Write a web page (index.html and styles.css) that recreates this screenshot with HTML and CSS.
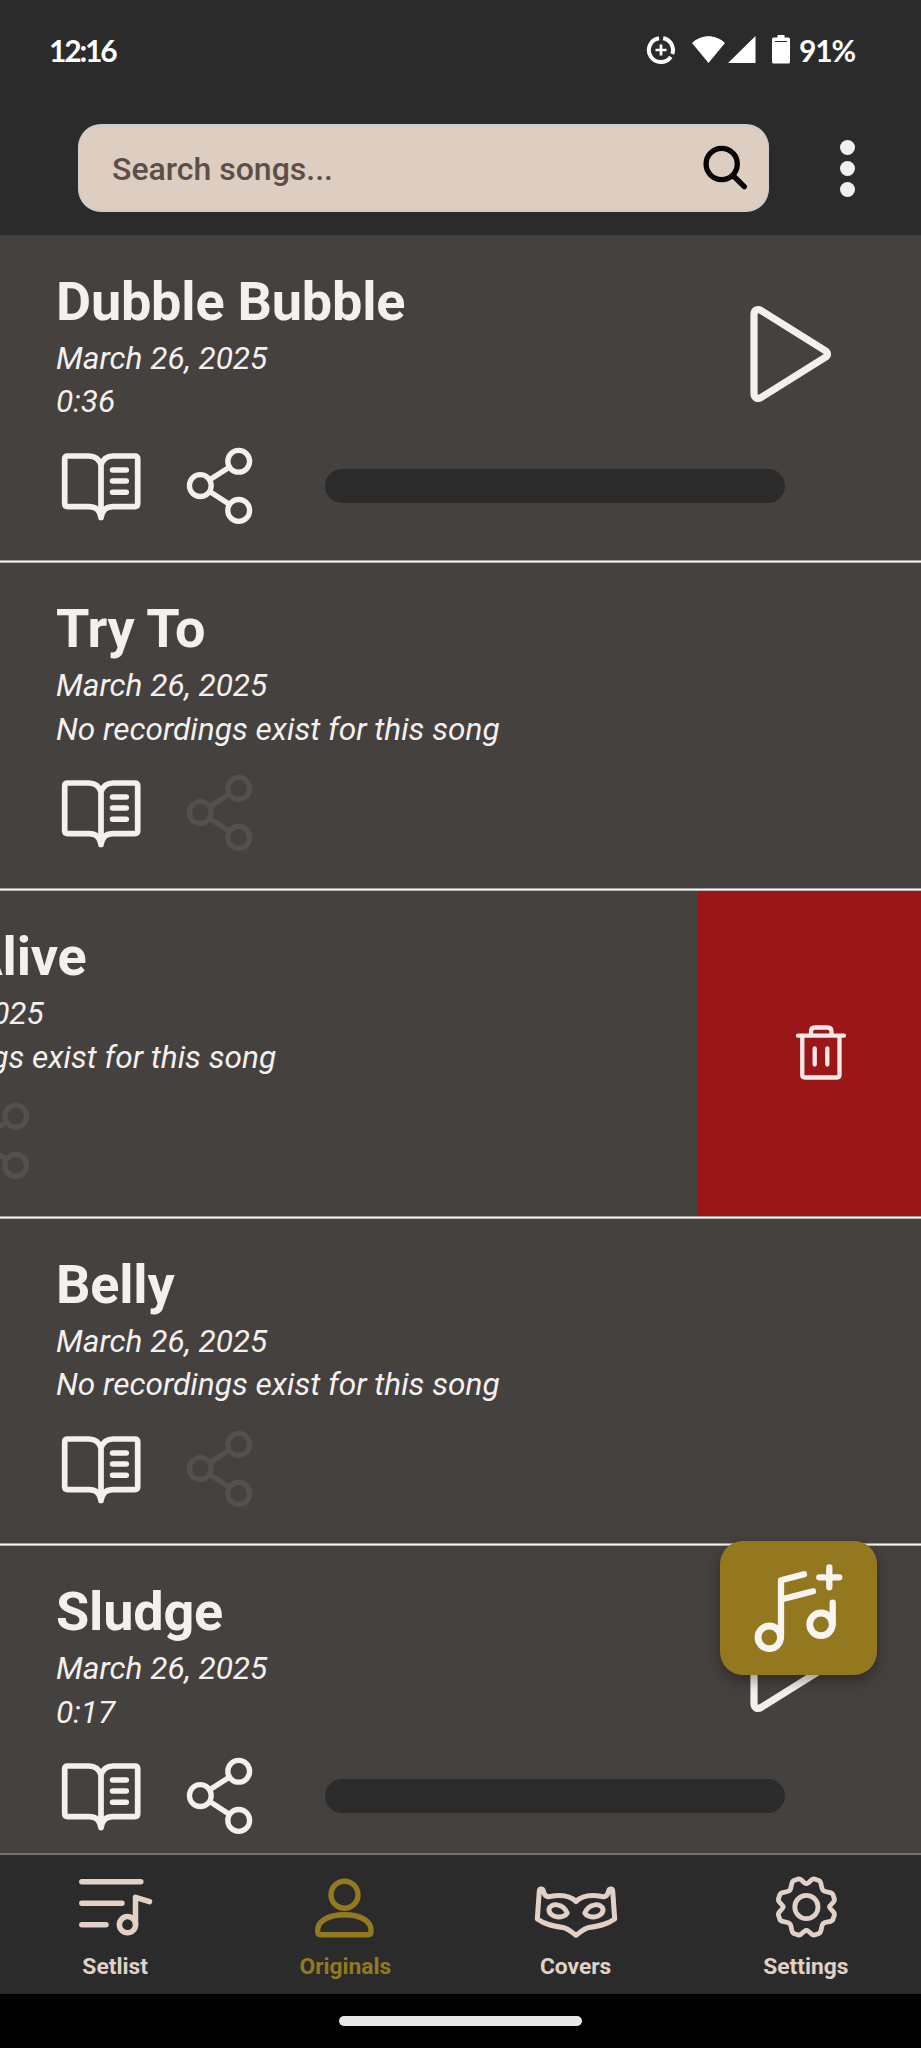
FILE: index.html
```html
<!DOCTYPE html>
<html lang="en">
<head>
<meta charset="utf-8">
<title>Originals</title>
<link rel="stylesheet" href="styles.css">
</head>
<body>
<svg class="defs" aria-hidden="true">
  <symbol id="book" viewBox="0 0 124 80">
    <path d="M45 19C43 13 39 10 33 10H11.7q-3 0-3 3V57.6q0 3 3 3H33C40 60.6 43.5 63.5 45 71.5C46.500 63.500 50 60.600 57 60.600H78.700q3 0 3-3V13q0-3-3-3H57C51 10 47 13 45 19V71.500" stroke-width="5.700"/>
    <path d="M56.500 24H70.300M56.500 35H70.300M56.500 46.200H70.300" stroke-width="5.500"/>
  </symbol>
  <symbol id="share" viewBox="0 0 80 80">
    <g stroke-width="5.300"><circle cx="20.300" cy="39.600" r="10.900"/><circle cx="58.700" cy="15.300" r="10.900"/><circle cx="58.700" cy="64.400" r="10.900"/><path d="M30.500 33.200 48.500 21.700M30.500 46 48.500 57.700"/></g>
  </symbol>
  <symbol id="play" viewBox="0 0 90 104">
    <path stroke-width="7.200" d="M8 12.500C8 8 11.500 6.500 15 8.500L79 48.500C82.300 50.500 82.300 53.500 79 55.500L15 95.500C11.500 97.500 8 96 8 91.500Z"/>
  </symbol>
</svg>
<div class="screen">
  <header class="top">
    <div class="status">
      <span class="clock">12:16</span>
      <div class="status-right">
        <svg class="saver" width="30" height="30" viewBox="0 0 30 30"><path d="M13 3.200A12 12 0 1 0 24.800 21.800M17.200 3.200A12 12 0 0 1 26.300 19" fill="none" stroke="#fff" stroke-width="4"/><path d="M15 9.500v11M9.500 15h11" stroke="#fff" stroke-width="2.700"/></svg>
        <svg class="wifi" width="64" height="30" viewBox="0 0 64 30"><path d="M0 8C9-1 24-1 33 8L16.500 28ZM36 28 63.500 28V1Z" fill="#fff"/></svg>
        <svg class="battery" width="18" height="30" viewBox="0 0 18 30"><path d="M5.500 0h7v2.500h4q1.500 0 1.500 1.500V27q0 1.500-1.500 1.500H1.500Q0 28.500 0 27V4Q0 2.500 1.500 2.500h4Z" fill="#fff"/><path d="M3 6.500h12" stroke="#2b2b2b" stroke-width="1"/></svg>
        <span class="percent">91%</span>
      </div>
    </div>
    <div class="tools">
      <div class="search"><span>Search songs...</span>
        <svg width="50" height="50" viewBox="0 0 50 50" fill="none" stroke="#050303" stroke-width="5.300" stroke-linecap="round"><circle cx="21.700" cy="21" r="15.600"/><path d="M33 32.500 44.300 43.700"/></svg>
      </div>
      <div class="menu"><i></i><i></i><i></i></div>
    </div>
  </header>

  <main class="songs">
    <article class="song"><div class="body">
      <div class="summary"><div><h2>Dubble Bubble</h2><p>March 26, 2025</p><p>0:36</p></div><svg class="ico play"><use href="#play"/></svg></div>
      <div class="actions"><svg class="ico book"><use href="#book"/></svg><svg class="ico share"><use href="#share"/></svg><div class="progress"></div></div>
    </div></article>
    <article class="song"><div class="body">
      <div class="summary"><div><h2>Try To</h2><p>March 26, 2025</p><p>No recordings exist for this song</p></div></div>
      <div class="actions"><svg class="ico book"><use href="#book"/></svg><svg class="ico share off"><use href="#share"/></svg></div>
    </div></article>
    <article class="song swiped"><div class="body">
      <div class="summary"><div><h2>Alive</h2><p>March 26, 2025</p><p>No recordings exist for this song</p></div></div>
      <div class="actions"><svg class="ico book"><use href="#book"/></svg><svg class="ico share off"><use href="#share"/></svg></div>
    </div>
      <div class="delete"><svg width="54" height="58" viewBox="0 0 54 58" fill="none" stroke="#fbe9e6" stroke-width="4.300" stroke-linecap="round" stroke-linejoin="round"><path d="M4 12.700H50M8.300 13V52q0 2.500 2.500 2.500H43q2.500 0 2.500-2.500V13M17 12V8.500q0-4 4-4H33.500q4 0 4 4V12M20.700 25.500V41.500M33.300 25.500V41.500"/></svg></div>
    </article>
    <article class="song"><div class="body">
      <div class="summary"><div><h2>Belly</h2><p>March 26, 2025</p><p>No recordings exist for this song</p></div></div>
      <div class="actions"><svg class="ico book"><use href="#book"/></svg><svg class="ico share off"><use href="#share"/></svg></div>
    </div></article>
    <article class="song"><div class="body">
      <div class="summary"><div><h2>Sludge</h2><p>March 26, 2025</p><p>0:17</p></div><svg class="ico play"><use href="#play"/></svg></div>
      <div class="actions"><svg class="ico book"><use href="#book"/></svg><svg class="ico share"><use href="#share"/></svg><div class="progress"></div></div>
    </div></article>
  </main>

  <nav class="tabs">
    <a class="tab"><svg class="ico" viewBox="0 0 90 80" stroke-width="5.500"><path d="M11.800 11.700H70.800M11.800 33.300H52M11.800 54.700H36M65.500 54.700V27.300L79.500 31.700"/><circle cx="57.500" cy="54.700" r="8.100"/></svg><span>Setlist</span></a>
    <a class="tab active"><svg class="ico" viewBox="0 0 90 80" stroke-width="5.400"><circle cx="44.500" cy="24.700" r="13.500"/><path d="M17.700 60C17.700 52 27 44.700 44.500 44.700S71 52 71 60v1.700q0 3-3 3H20.700q-3 0-3-3Z"/></svg><span>Originals</span></a>
    <a class="tab"><svg class="ico" viewBox="0 0 90 80" stroke-width="5"><path d="M45 31.500C39 25.500 30 24.500 19 26.500C15.500 27.200 14 26 13 23L12.200 20.500C11.500 18.500 8.600 18.500 8.300 20.800L6.300 49C14 54.500 22 56 32 57.500C37 58.500 40 61.500 45 65.300C50 61.500 53 58.500 58 57.500C68 56 76 54.500 83.700 49L81.700 20.800C81.400 18.500 78.500 18.500 77.800 20.500L77 23C76 26 74.500 27.200 71 26.500C60 24.500 51 25.500 45 31.500Z"/><path d="M17.900 39.500C19.500 32.500 32 33 36.200 43C33 49 18.500 48.500 17.900 39.500ZM72.100 39.500C70.500 32.500 58 33 53.800 43C57 49 71.500 48.500 72.100 39.500Z"/></svg><span>Covers</span></a>
    <a class="tab"><svg class="ico" viewBox="0 0 90 80" stroke-width="4.800"><g transform="translate(45.400 37)"><circle r="11.600"/>
      <path id="cog" d="M0-23.300C3-23.300 4-28.500 8-28L12.500-26.500C16-25 14-19.500 16.500-16.800C19.500-14 25-16 26.500-12.500L28-8C28.500-4 23.300-3 23.300 0"/><use href="#cog" transform="rotate(90)"/><use href="#cog" transform="rotate(180)"/><use href="#cog" transform="rotate(270)"/></g></svg><span>Settings</span></a>
  </nav>
  <footer class="home"><div></div></footer>

  <button class="fab" aria-label="Add song"><svg class="ico" width="157" height="134" viewBox="0 0 157 134" stroke-width="6.300"><circle cx="49.300" cy="96.300" r="11.300" stroke-width="6.800"/><path d="M61 96.300V39.300L84 33.200M61 58.500 93 50.300M112.700 83.300V61.700M109.300 26.300V46.300M99.300 36.300H119.300"/><circle cx="101" cy="83.300" r="11.300" stroke-width="6.800"/></svg></button>
</div>
</body>
</html>
```
FILE: styles.css
```css
* { box-sizing: border-box; }
body { margin: 0; background: #000; font-family: Roboto, "Liberation Sans", sans-serif; }
h2, p { margin: 0; }
svg { display: block; flex: none; }
.defs { position: absolute; width: 0; height: 0; }
.screen { position: relative; width: 921px; height: 2048px; overflow: hidden; display: flex; flex-direction: column; }
.ico { fill: none; stroke: currentColor; stroke-linecap: round; stroke-linejoin: round; }

.top { height: 235px; flex: none; background: #2b2b2b; }
.status { height: 100px; padding: 0 65px 0 49px; display: flex; align-items: center; justify-content: space-between; color: #fff; font: 700 30px/36px Lato, sans-serif; }
.clock { font-size: 30px; letter-spacing: -2.2px; }
.status-right { display: flex; align-items: center; }
.wifi { margin-left: 16px; }
.battery { margin-left: 16px; }
.percent { margin-left: 9px; width: 57px; letter-spacing: -1.2px; }
.tools { display: flex; align-items: center; padding: 24px 66px 0 78px; justify-content: space-between; }
.search { width: 691px; height: 88px; border: 3px solid #cfcdcc; border-width: 3px 1px; border-radius: 23px; background: #decdc1; display: flex; align-items: center; justify-content: space-between; padding: 0 18px 0 33px; color: #5b5049; font-weight: 500; font-size: 32px; }
.search span { padding-top: 2px; }
.menu { display: flex; flex-direction: column; gap: 6px; }
.menu i { width: 15px; height: 15px; border-radius: 50%; background: #f1f0ef; }

.songs { height: 1618px; flex: none; overflow: hidden; background: #45413e; color: #f3f0ef; padding-top: .7px; }
.song { position: relative; height: 327.7px; display: flex; overflow: hidden; }
.body { width: 921px; flex: none; height: 327.7px; padding: 34px 0 0 56px; }
.song::after { content: ""; position: absolute; left: 0; right: 0; bottom: 0; height: 3px; background: linear-gradient(#a5a19f 1px, #f6f2f0 1px 2px, #b9b5b3 2px); }
.summary { display: flex; justify-content: space-between; height: 154.300px; }
.summary h2 { font-size: 54px; line-height: 64px; font-weight: 700; margin-bottom: 3px; letter-spacing: -.2px; }
.summary p { font-size: 31.600px; line-height: 43.600px; font-style: italic; white-space: nowrap; }
.play { width: 90px; height: 104px; margin: 32px 85px 0 0; }
.actions { display: flex; align-items: center; height: 80px; margin-top: 21.700px; }
.book { width: 124px; height: 80px; }
.share { width: 80px; height: 80px; }
.off { color: #545050; }
.progress { width: 460px; height: 34px; border-radius: 17px; background: #2b2b2b; margin-left: 65px; }
.swiped .body { margin-left: -223.500px; }
.swiped h2 { width: 254px; text-align: right; }
.delete { width: 223.500px; flex: none; background: #9b1618; display: flex; align-items: center; justify-content: center; padding: 0 0 5px 24px; }

.tabs { height: 141px; flex: none; display: flex; background: #2b2b2b; border-top: 2px solid #77736f; color: #e1d1c7; }
.tab { flex: 1; display: flex; flex-direction: column; align-items: center; padding-top: 15px; font-size: 22.800px; line-height: 26px; font-weight: 700; }
.tab svg { width: 90px; height: 80px; margin-bottom: 4px; }
.active { color: #93791f; }
.home { height: 54px; flex: none; background: #000; display: flex; justify-content: center; padding-top: 22px; }
.home div { width: 243px; height: 10px; border-radius: 5px; background: #e8e8e8; }

.fab { position: absolute; left: 720px; top: 1541px; width: 157px; height: 134px; padding: 0; border: 0; border-radius: 23px; background: #937820; color: #f8f5f0; box-shadow: 0 6px 14px rgba(0, 0, 0, .35); }
```
